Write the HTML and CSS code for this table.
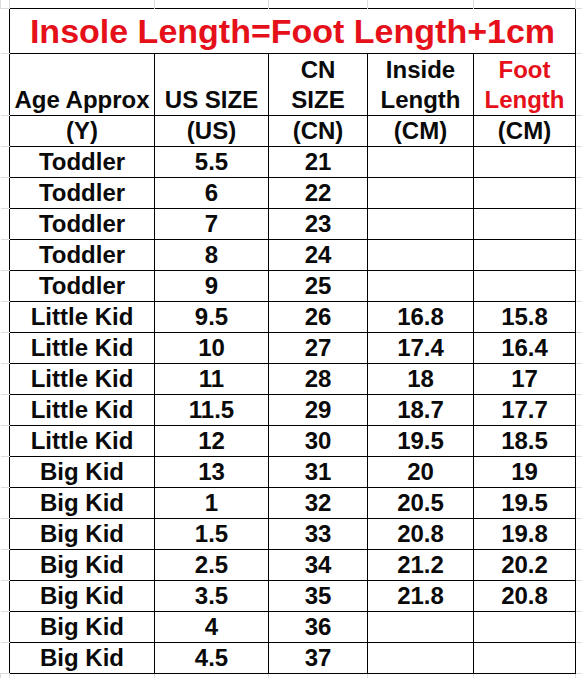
FILE: index.html
```html
<!DOCTYPE html>
<html>
<head>
<meta charset="utf-8">
<link rel="stylesheet" href="styles.css">
</head>
<body>
<table class="sheet">
  <colgroup>
    <col class="c-edge-l">
    <col class="c-age">
    <col class="c-us">
    <col class="c-cn">
    <col class="c-in">
    <col class="c-foot">
    <col class="c-edge-r">
  </colgroup>
  <tr class="r-top">
    <td class="gv"></td><td class="gv"></td><td class="gv"></td><td class="gv"></td><td class="gv"></td><td class="gv"></td><td class="gv"></td>
  </tr>
  <tr class="r-title">
    <td class="gh"></td>
    <td class="cell title" colspan="5">Insole Length=Foot Length+1cm</td>
    <td class="gh"></td>
  </tr>
  <tr class="r-head">
    <td class="gh"></td>
    <td class="cell head">Age Approx</td>
    <td class="cell head">US SIZE</td>
    <td class="cell head">CN<br>SIZE</td>
    <td class="cell head">Inside<br>Length</td>
    <td class="cell head red">Foot<br>Length</td>
    <td class="gh"></td>
  </tr>
  <tr class="r-row">
    <td class="gh"></td><td class="cell">(Y)</td><td class="cell">(US)</td><td class="cell">(CN)</td><td class="cell">(CM)</td><td class="cell">(CM)</td><td class="gh"></td>
  </tr>
  <tr class="r-row"><td class="gh"></td><td class="cell">Toddler</td><td class="cell">5.5</td><td class="cell">21</td><td class="cell"></td><td class="cell"></td><td class="gh"></td></tr>
  <tr class="r-row"><td class="gh"></td><td class="cell">Toddler</td><td class="cell">6</td><td class="cell">22</td><td class="cell"></td><td class="cell"></td><td class="gh"></td></tr>
  <tr class="r-row"><td class="gh"></td><td class="cell">Toddler</td><td class="cell">7</td><td class="cell">23</td><td class="cell"></td><td class="cell"></td><td class="gh"></td></tr>
  <tr class="r-row"><td class="gh"></td><td class="cell">Toddler</td><td class="cell">8</td><td class="cell">24</td><td class="cell"></td><td class="cell"></td><td class="gh"></td></tr>
  <tr class="r-row"><td class="gh"></td><td class="cell">Toddler</td><td class="cell">9</td><td class="cell">25</td><td class="cell"></td><td class="cell"></td><td class="gh"></td></tr>
  <tr class="r-row"><td class="gh"></td><td class="cell">Little Kid</td><td class="cell">9.5</td><td class="cell">26</td><td class="cell">16.8</td><td class="cell">15.8</td><td class="gh"></td></tr>
  <tr class="r-row"><td class="gh"></td><td class="cell">Little Kid</td><td class="cell">10</td><td class="cell">27</td><td class="cell">17.4</td><td class="cell">16.4</td><td class="gh"></td></tr>
  <tr class="r-row"><td class="gh"></td><td class="cell">Little Kid</td><td class="cell">11</td><td class="cell">28</td><td class="cell">18</td><td class="cell">17</td><td class="gh"></td></tr>
  <tr class="r-row"><td class="gh"></td><td class="cell">Little Kid</td><td class="cell">11.5</td><td class="cell">29</td><td class="cell">18.7</td><td class="cell">17.7</td><td class="gh"></td></tr>
  <tr class="r-row"><td class="gh"></td><td class="cell">Little Kid</td><td class="cell">12</td><td class="cell">30</td><td class="cell">19.5</td><td class="cell">18.5</td><td class="gh"></td></tr>
  <tr class="r-row"><td class="gh"></td><td class="cell">Big Kid</td><td class="cell">13</td><td class="cell">31</td><td class="cell">20</td><td class="cell">19</td><td class="gh"></td></tr>
  <tr class="r-row"><td class="gh"></td><td class="cell">Big Kid</td><td class="cell">1</td><td class="cell">32</td><td class="cell">20.5</td><td class="cell">19.5</td><td class="gh"></td></tr>
  <tr class="r-row"><td class="gh"></td><td class="cell">Big Kid</td><td class="cell">1.5</td><td class="cell">33</td><td class="cell">20.8</td><td class="cell">19.8</td><td class="gh"></td></tr>
  <tr class="r-row"><td class="gh"></td><td class="cell">Big Kid</td><td class="cell">2.5</td><td class="cell">34</td><td class="cell">21.2</td><td class="cell">20.2</td><td class="gh"></td></tr>
  <tr class="r-row"><td class="gh"></td><td class="cell">Big Kid</td><td class="cell">3.5</td><td class="cell">35</td><td class="cell">21.8</td><td class="cell">20.8</td><td class="gh"></td></tr>
  <tr class="r-row"><td class="gh"></td><td class="cell">Big Kid</td><td class="cell">4</td><td class="cell">36</td><td class="cell"></td><td class="cell"></td><td class="gh"></td></tr>
  <tr class="r-row"><td class="gh"></td><td class="cell">Big Kid</td><td class="cell">4.5</td><td class="cell">37</td><td class="cell"></td><td class="cell"></td><td class="gh"></td></tr>
  <tr class="r-bottom">
    <td class="gv"></td><td class="gv"></td><td class="gv"></td><td class="gv"></td><td class="gv"></td><td class="gv"></td><td class="gv"></td>
  </tr>
</table>
</body>
</html>
```

FILE: styles.css
```css
html, body {
  margin: 0;
  padding: 0;
  background: #ffffff;
}

.sheet {
  border-collapse: collapse;
  table-layout: fixed;
  width: 582px;
  font-family: "Liberation Sans", Arial, sans-serif;
  font-weight: bold;
  color: #0a0a0a;
}

.c-edge-l { width: 9px; }
.c-age { width: 145px; }
.c-us { width: 114px; }
.c-cn { width: 99px; }
.c-in { width: 106px; }
.c-foot { width: 102px; }
.c-edge-r { width: 7px; }

.sheet td {
  padding: 0;
  text-align: center;
  vertical-align: middle;
  box-sizing: border-box;
}

.sheet .gv {
  border-left: 1px solid #dcdcdc;
  border-right: 1px solid #dcdcdc;
}

.sheet .gh {
  border-top: 1px solid #dcdcdc;
  border-bottom: 1px solid #dcdcdc;
}

.sheet .cell {
  border: 1px solid #000000;
  font-size: 24px;
  line-height: 30px;
  white-space: nowrap;
}

.r-top td { height: 8px; }
.r-title td { height: 45px; }
.r-head td { height: 62px; }
.r-row td { height: 31px; }
.r-bottom td { height: 5px; }

.sheet .title {
  font-size: 34px;
  color: #e5101a;
  line-height: 40px;
}

.sheet .head {
  vertical-align: bottom;
}

.sheet .red {
  color: #e5101a;
}
```
